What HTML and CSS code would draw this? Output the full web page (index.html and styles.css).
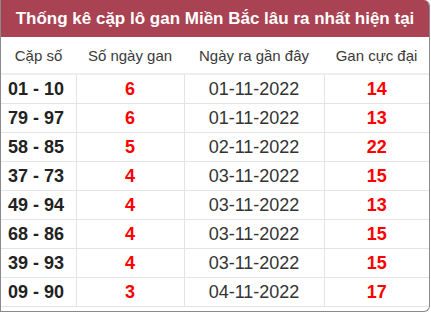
FILE: index.html
```html
<!DOCTYPE html>
<html>
<head>
<meta charset="utf-8">
<link rel="stylesheet" href="styles.css">
</head>
<body>
<div class="box">
  <div class="title">Thống kê cặp lô gan Miền Bắc lâu ra nhất hiện tại</div>
  <table class="tbl">
    <thead>
      <tr><th>Cặp số</th><th>Số ngày gan</th><th>Ngày ra gần đây</th><th>Gan cực đại</th></tr>
    </thead>
    <tbody>
      <tr><td class="pair">01 - 10</td><td class="red">6</td><td>01-11-2022</td><td class="red">14</td></tr>
      <tr><td class="pair">79 - 97</td><td class="red">6</td><td>01-11-2022</td><td class="red">13</td></tr>
      <tr><td class="pair">58 - 85</td><td class="red">5</td><td>02-11-2022</td><td class="red">22</td></tr>
      <tr><td class="pair">37 - 73</td><td class="red">4</td><td>03-11-2022</td><td class="red">15</td></tr>
      <tr><td class="pair">49 - 94</td><td class="red">4</td><td>03-11-2022</td><td class="red">13</td></tr>
      <tr><td class="pair">68 - 86</td><td class="red">4</td><td>03-11-2022</td><td class="red">15</td></tr>
      <tr><td class="pair">39 - 93</td><td class="red">4</td><td>03-11-2022</td><td class="red">15</td></tr>
      <tr><td class="pair">09 - 90</td><td class="red">3</td><td>04-11-2022</td><td class="red">17</td></tr>
    </tbody>
  </table>
</div>
</body>
</html>
```
FILE: styles.css
```css
html, body { margin: 0; padding: 0; background: #fff; }
body { font-family: "Liberation Sans", Arial, sans-serif; }
.box {
  width: 428px;
  height: 311px;
  border: 1px solid #8a8a8a;
  border-top: none;
  border-radius: 0 6px 6px 0;
  overflow: hidden;
  box-sizing: content-box;
}
.title {
  background: #a94252;
  color: #fff;
  font-weight: bold;
  font-size: 17px;
  height: 37px;
  line-height: 37px;
  text-align: center;
}
.tbl {
  width: 100%;
  border-collapse: collapse;
  table-layout: fixed;
}
.tbl th {
  height: 36px;
  font-size: 15px;
  font-weight: normal;
  color: #3a3a3a;
  border-bottom: 2px solid #eee;
  padding: 0;
}
.tbl th:nth-child(1) { width: 75px; }
.tbl th:nth-child(2) { width: 108px; }
.tbl th:nth-child(3) { width: 140px; }
.tbl td {
  height: 28px;
  border: 1px solid #e4e4e4;
  text-align: center;
  font-size: 18px;
  color: #333;
  padding: 0;
}
.tbl tr td:first-child { border-left: none; }
.tbl tr td:last-child { border-right: none; }
.tbl td.pair { font-weight: bold; text-align: left; padding-left: 7px; color: #222; }
.tbl td.red { color: #f00; font-weight: bold; }
```
